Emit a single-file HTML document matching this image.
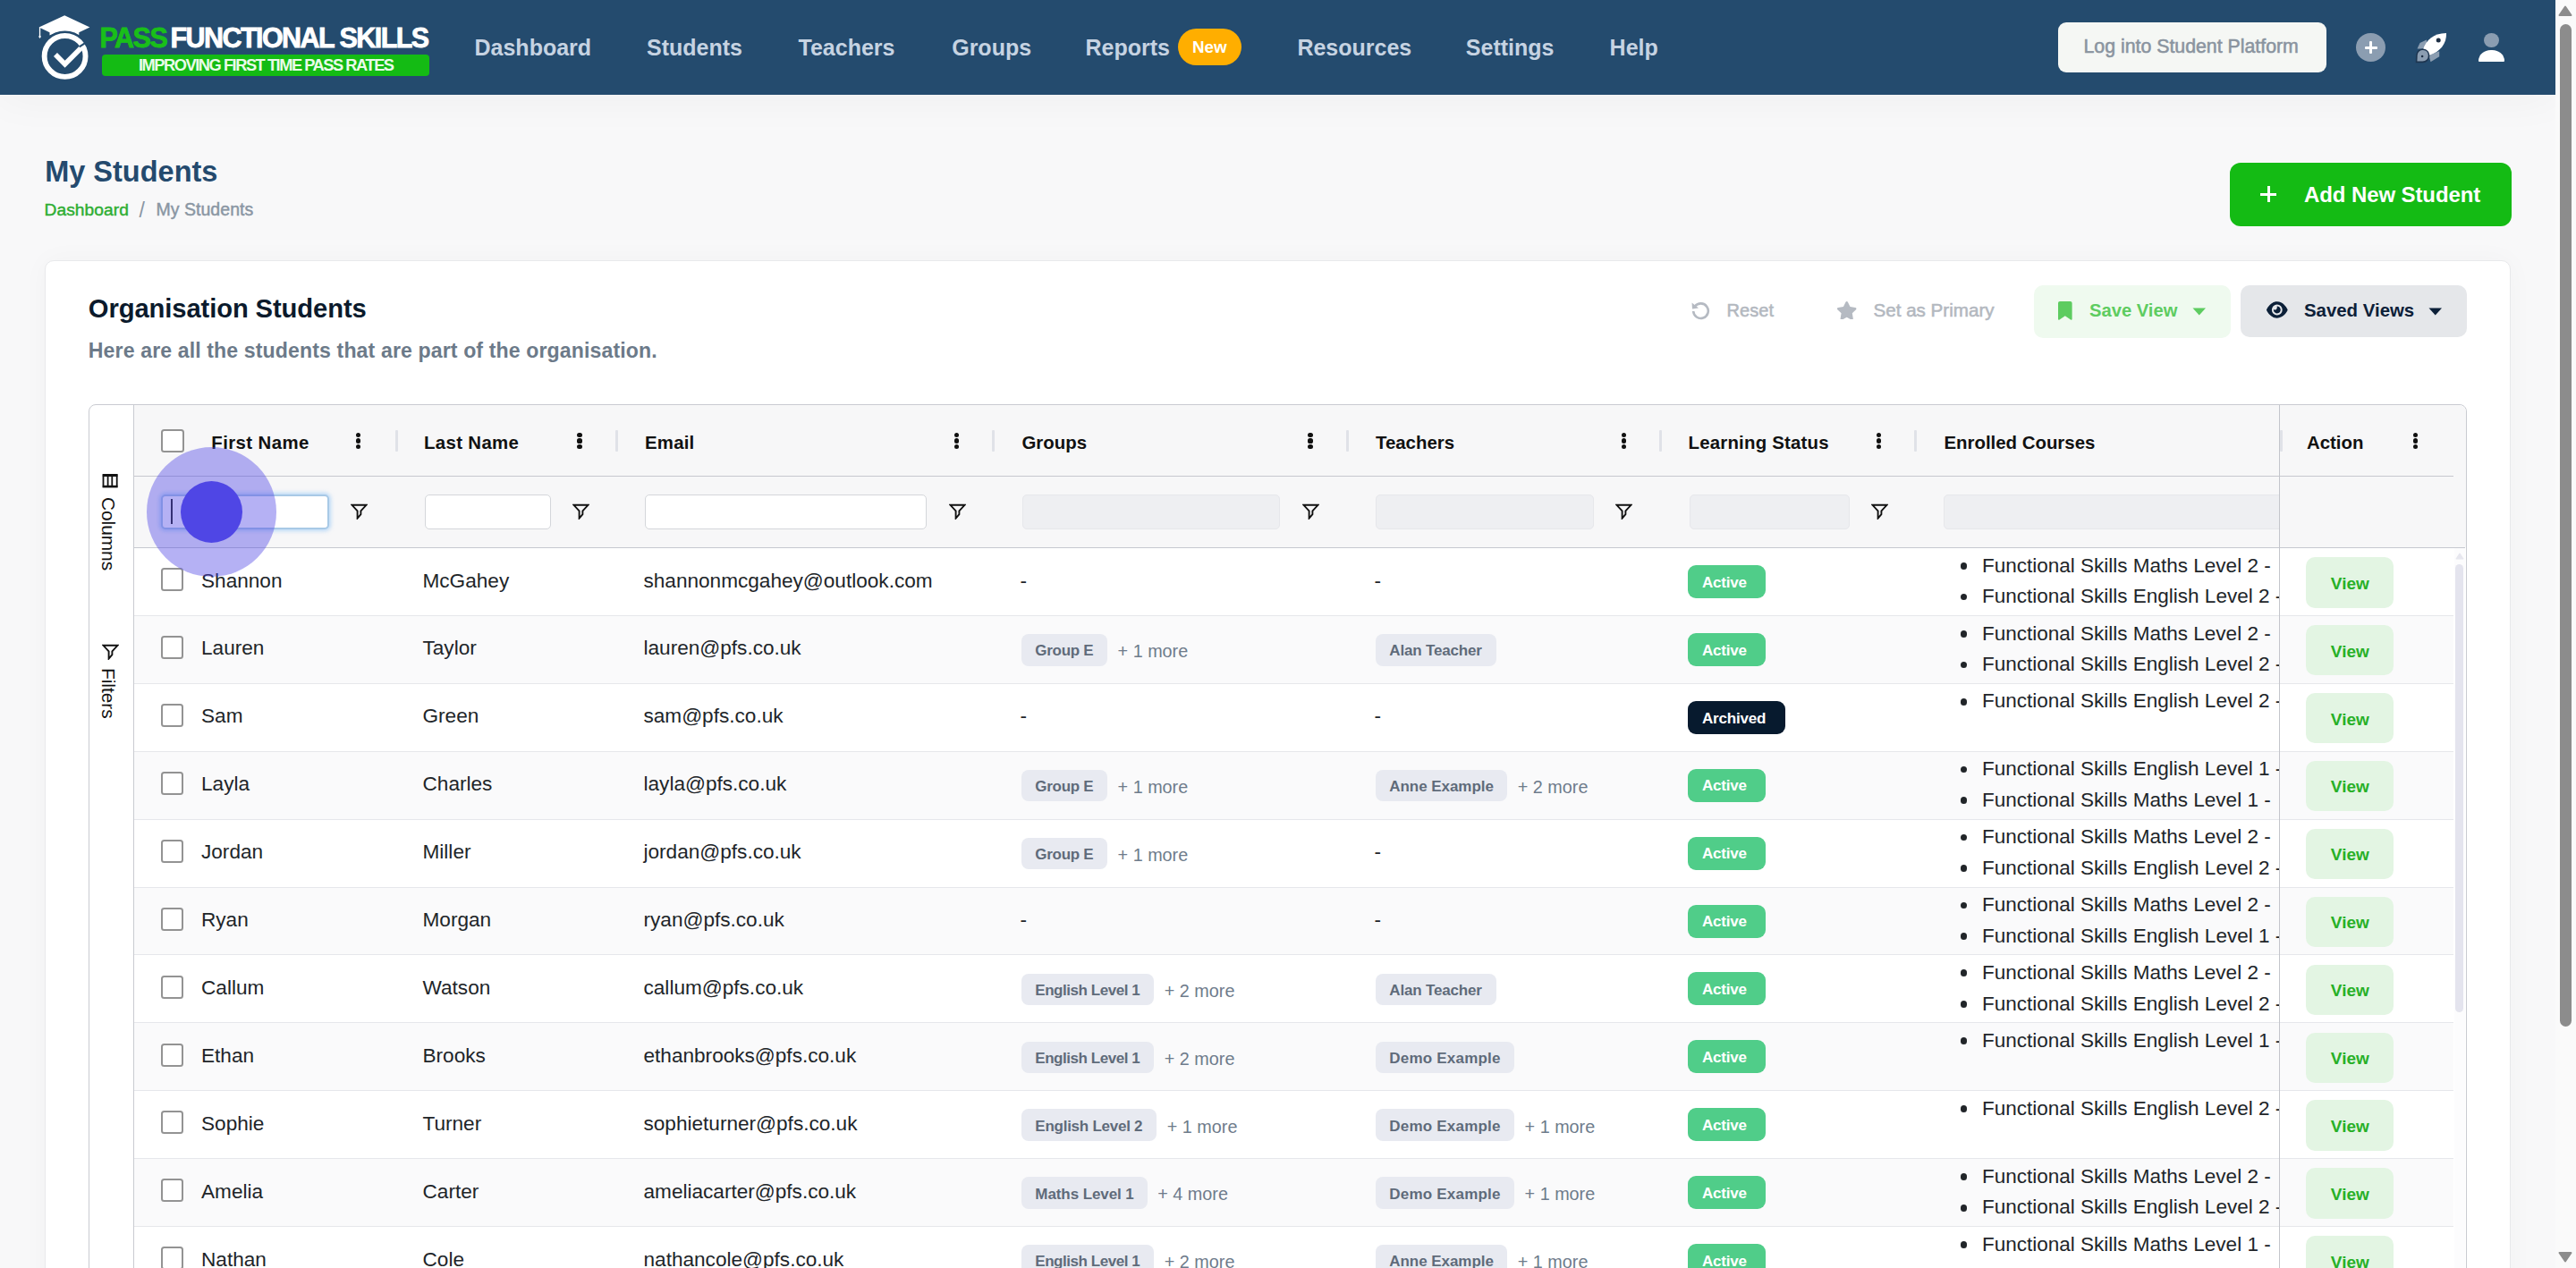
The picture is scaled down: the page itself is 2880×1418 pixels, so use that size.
<!DOCTYPE html>
<html><head><meta charset="utf-8"><title>My Students</title><style>
*{box-sizing:border-box;margin:0;padding:0}
html,body{width:2880px;height:1418px;overflow:hidden}
body{position:relative;background:#f8f8f9;font-family:"Liberation Sans", sans-serif}
.t{position:absolute;white-space:nowrap}
.a{position:absolute}
@media (max-width:2000px){html{zoom:0.5}}
</style></head>
<body>
<div class="a" style="left:0;top:0;width:2857px;height:106px;background:#244b6e;box-shadow:0 4px 50px rgba(0,0,0,0.045)"></div>
<svg class="a" style="left:30px;top:10px" width="80" height="90" viewBox="30 10 80 90">
<path d="M72.2 17.2 L100.4 30.6 L88.3 36.2 L88.3 39.6 Q72.6 31 55.5 39.6 L55.5 36.2 L43.6 30.4 Z" fill="#fff"/>
<rect x="43.9" y="30.4" width="1.3" height="10.5" fill="#fff"/>
<path d="M44.55 39 L45.9 41 L44.55 43 L43.2 41 Z" fill="#fff"/>
<circle cx="72.6" cy="62.9" r="27.2" fill="none" stroke="#244b6e" stroke-width="2.6"/>
<circle cx="72.6" cy="62.9" r="22.95" fill="none" stroke="#fff" stroke-width="5.9"/>
<path d="M62 61 L72.6 71.8 L91.5 52.8" fill="none" stroke="#fff" stroke-width="5.6" stroke-linejoin="miter"/>
<path d="M88.7 52.4 L95.2 48.2" fill="none" stroke="#244b6e" stroke-width="2.2"/>
</svg>
<div class="t" style="left:111.4px;top:27.4px;font-size:30.5px;line-height:30.5px;color:#19bf19;font-weight:700;letter-spacing:-1.45px;-webkit-text-stroke:0.8px #19bf19;">PASS</div>
<div class="t" style="left:190.4px;top:27.4px;font-size:30.5px;line-height:30.5px;color:#fff;font-weight:700;letter-spacing:-1.55px;-webkit-text-stroke:0.8px #fff;">FUNCTIONAL SKILLS</div>
<div class="a" style="left:114px;top:61px;width:366px;height:24px;background:#14bb14;border-radius:4px"></div>
<div class="t" style="left:155px;top:64.2px;font-size:18.3px;line-height:18.3px;color:#e9fbe9;font-weight:700;letter-spacing:-1.48px;">IMPROVING FIRST TIME PASS RATES</div>
<div class="t" style="left:530.5px;top:41.2px;font-size:25px;line-height:25px;color:#c6d3e2;font-weight:700;letter-spacing:0px;">Dashboard</div>
<div class="t" style="left:723px;top:41.2px;font-size:25px;line-height:25px;color:#c6d3e2;font-weight:700;letter-spacing:0px;">Students</div>
<div class="t" style="left:892.5px;top:41.2px;font-size:25px;line-height:25px;color:#c6d3e2;font-weight:700;letter-spacing:0px;">Teachers</div>
<div class="t" style="left:1064.2px;top:41.2px;font-size:25px;line-height:25px;color:#c6d3e2;font-weight:700;letter-spacing:0px;">Groups</div>
<div class="t" style="left:1213.5px;top:41.2px;font-size:25px;line-height:25px;color:#c6d3e2;font-weight:700;letter-spacing:0px;">Reports</div>
<div class="t" style="left:1450.4px;top:41.2px;font-size:25px;line-height:25px;color:#c6d3e2;font-weight:700;letter-spacing:0px;">Resources</div>
<div class="t" style="left:1638.8px;top:41.2px;font-size:25px;line-height:25px;color:#c6d3e2;font-weight:700;letter-spacing:0px;">Settings</div>
<div class="t" style="left:1799.6px;top:41.2px;font-size:25px;line-height:25px;color:#c6d3e2;font-weight:700;letter-spacing:0px;">Help</div>
<div class="a" style="left:1317px;top:32px;width:71px;height:41px;background:#ffae00;border-radius:21px"></div>
<div class="t" style="left:1333px;top:43.9px;font-size:18.8px;line-height:18.8px;color:#fff;font-weight:700;letter-spacing:0px;">New</div>
<div class="a" style="left:2301px;top:25px;width:300px;height:56px;background:#f5f7f4;border-radius:9px"></div>
<div class="t" style="left:2329.5px;top:41.6px;font-size:21.3px;line-height:21.3px;color:#8a949f;font-weight:400;letter-spacing:0px;-webkit-text-stroke:0.55px #8a949f;">Log into Student Platform</div>
<div class="a" style="left:2634.4px;top:36.8px;width:32.8px;height:32.2px;border-radius:50%;background:#8b9db1"></div>
<div class="a" style="left:2643.6px;top:51.5px;width:14.7px;height:3px;background:#fff;border-radius:1px"></div>
<div class="a" style="left:2649.3px;top:46px;width:3.2px;height:14px;background:#fff;border-radius:1px"></div>
<svg class="a" style="left:2698px;top:33px" width="42" height="40" viewBox="2698 33 42 40">
<path d="M2702.5 54.5 L2705.5 48 L2713 44.5 L2713 54.5 Z" fill="#8b9db1"/>
<path d="M2715.5 62 L2727.2 57.2 L2727.2 63.2 L2717.5 69.2 Z" fill="#8b9db1"/>
<path d="M2709.2 54.8 C2712.5 45, 2720 37.3, 2735 36.9 C2735.5 49, 2728 57.5, 2716.3 61.8 Z" fill="#fff"/>
<circle cx="2726.2" cy="44.9" r="2.5" fill="#1d2f44"/>
<path d="M2701.6 69.4 L2701.9 61.5 C2702.3 57, 2706 55, 2709 55.2 C2713 55.5, 2715.6 58.5, 2715.6 62.3 C2715.6 66.5, 2712.5 69.4, 2708.5 69.4 Z" fill="#8b9db1" stroke="#1d3550" stroke-width="1.6"/>
<circle cx="2708.1" cy="63" r="1.3" fill="#1d2f44"/>
</svg>
<div class="a" style="left:2777px;top:36.6px;width:17.4px;height:16.6px;border-radius:50%;background:#8b9db1"></div>
<div class="a" style="left:2770.8px;top:56px;width:29.4px;height:13.2px;border-radius:14.7px 14.7px 1px 1px / 13px 13px 1px 1px;background:#fff"></div>
<div class="a" style="left:2857px;top:0;width:23px;height:1418px;background:#fafafa"></div>
<div class="a" style="left:2862px;top:27px;width:13px;height:1121px;background:#8c8c8c;border-radius:7px"></div>
<svg class="a" style="left:2860px;top:5px" width="16" height="14"><path d="M1.5 12 L8 2.5 L14.5 12 Z" fill="#8c8c8c" stroke="#8c8c8c" stroke-linejoin="round" stroke-width="2"/></svg>
<svg class="a" style="left:2860px;top:1399px" width="16" height="14"><path d="M1.5 2 L8 11.5 L14.5 2 Z" fill="#8c8c8c" stroke="#8c8c8c" stroke-linejoin="round" stroke-width="2"/></svg>
<div class="t" style="left:50.2px;top:175.5px;font-size:32.5px;line-height:32.5px;color:#244a6e;font-weight:700;letter-spacing:0px;">My Students</div>
<div class="t" style="left:49.6px;top:224.9px;font-size:19.2px;line-height:19.2px;color:#2eae33;font-weight:400;letter-spacing:0.05px;-webkit-text-stroke:0.45px #2eae33;">Dashboard</div>
<div class="t" style="left:155.5px;top:224.2px;font-size:23px;line-height:23px;color:#8a96a3;font-weight:400;letter-spacing:0px;">/</div>
<div class="t" style="left:174.4px;top:224.6px;font-size:19.5px;line-height:19.5px;color:#8a96a3;font-weight:400;letter-spacing:0.05px;-webkit-text-stroke:0.45px #8a96a3;">My Students</div>
<div class="a" style="left:2493px;top:182px;width:315px;height:71px;background:#14bb14;border-radius:12px"></div>
<div class="a" style="left:2527px;top:215.5px;width:18px;height:3px;background:#fff"></div>
<div class="a" style="left:2534.5px;top:208px;width:3px;height:18px;background:#fff"></div>
<div class="t" style="left:2576px;top:205.8px;font-size:24px;line-height:24px;color:#fff;font-weight:700;letter-spacing:-0.1px;">Add New Student</div>
<div class="a" style="left:50px;top:291px;width:2757px;height:1200px;background:#fff;border-radius:10px;box-shadow:0 0 30px rgba(0,0,0,0.03);border:1px solid #e8e9eb"></div>
<div class="t" style="left:98.8px;top:331.1px;font-size:29.2px;line-height:29.2px;color:#0b1a2c;font-weight:700;letter-spacing:-0.1px;">Organisation Students</div>
<div class="t" style="left:98.8px;top:380.5px;font-size:23.1px;line-height:23.1px;color:#6c7a89;font-weight:700;letter-spacing:0.12px;">Here are all the students that are part of the organisation.</div>
<svg class="a" style="left:1889px;top:336px" width="24" height="22" viewBox="0 0 24 22">
<path d="M6 6.5 A8.3 8.3 0 1 1 4.2 12" fill="none" stroke="#b5bac2" stroke-width="2.6"/>
<path d="M2.5 2.5 L3 9.5 L10 8.5 Z" fill="#b5bac2"/></svg>
<div class="t" style="left:1930.5px;top:337.2px;font-size:20px;line-height:20px;color:#b3b8bf;font-weight:400;letter-spacing:0.1px;-webkit-text-stroke:0.55px #b3b8bf;">Reset</div>
<svg class="a" style="left:2052.5px;top:336.5px" width="23.4" height="20.8" viewBox="0 0 576 512"><path fill="#b5bac2" d="M316.9 18C311.6 7 300.4 0 288.1 0s-23.4 7-28.8 18L195 150.3 51.4 171.5c-12 1.8-22 10.2-25.7 21.7s-.7 24.2 7.9 32.7L137.8 329 113.2 474.7c-2 12 3 24.2 12.9 31.3s23 8 33.8 2.3l128.3-68.5 128.3 68.5c10.8 5.7 23.8 4.9 33.8-2.3s14.9-19.3 12.9-31.3L438.5 329 542.7 225.9c8.6-8.5 11.7-21.2 7.9-32.7s-13.7-19.9-25.7-21.7L381.2 150.3 316.9 18z"/></svg>
<div class="t" style="left:2094.5px;top:336.7px;font-size:20.6px;line-height:20.6px;color:#b3b8bf;font-weight:400;letter-spacing:0px;-webkit-text-stroke:0.55px #b3b8bf;">Set as Primary</div>
<div class="a" style="left:2273.5px;top:318.5px;width:220px;height:59px;background:#effaef;border-radius:10px"></div>
<svg class="a" style="left:2301.2px;top:336.8px" width="15.6" height="20.8" viewBox="0 0 384 512"><path fill="#5dcc60" d="M0 48V487.7C0 501.1 10.9 512 24.3 512c5 0 9.9-1.5 14-4.4L192 400 345.7 507.6c4.1 2.9 9 4.4 14 4.4c13.4 0 24.3-10.9 24.3-24.3V48c0-26.5-21.5-48-48-48H48C21.5 0 0 21.5 0 48z"/></svg>
<div class="t" style="left:2336px;top:336.5px;font-size:20.2px;line-height:20.2px;color:#5dcc60;font-weight:700;letter-spacing:0px;">Save View</div>
<svg class="a" style="left:2451px;top:344px" width="16" height="9"><path d="M0.5 0.5 L15 0.5 L7.75 8.5 Z" fill="#5dcc60"/></svg>
<div class="a" style="left:2505px;top:319px;width:253px;height:58px;background:#e5e7ea;border-radius:10px"></div>
<svg class="a" style="left:2534px;top:336.1px" width="23.6" height="21" viewBox="0 0 576 512"><path fill="#0c2038" d="M288 32c-80.8 0-145.5 36.8-192.6 80.6C48.6 156 17.3 208 2.5 243.7c-3.3 7.9-3.3 16.7 0 24.6C17.3 304 48.6 356 95.4 399.4 142.5 443.2 207.2 480 288 480s145.5-36.8 192.6-80.6c46.8-43.5 78.1-95.4 93-131.1 3.3-7.9 3.3-16.7 0-24.6-14.9-35.7-46.2-87.7-93-131.1C433.5 68.8 368.8 32 288 32zM144 256a144 144 0 1 1 288 0 144 144 0 1 1 -288 0zm144-64c0 35.3-28.7 64-64 64-7.1 0-13.9-1.2-20.3-3.3-5.5-1.8-11.9 1.6-11.7 7.4.3 6.9 1.3 13.8 3.2 20.7 13.7 51.2 66.4 81.6 117.6 67.9s81.6-66.4 67.9-117.6c-11.1-41.5-47.8-69.4-88.6-71.1-5.8-.2-9.2 6.1-7.4 11.7 2.1 6.4 3.3 13.2 3.3 20.3z"/></svg>
<div class="t" style="left:2576px;top:337.3px;font-size:20.4px;line-height:20.4px;color:#0c2038;font-weight:700;letter-spacing:0px;">Saved Views</div>
<svg class="a" style="left:2715px;top:344px" width="16" height="9"><path d="M0.5 0.5 L15 0.5 L7.75 8.5 Z" fill="#0c2038"/></svg>
<div class="a" style="left:99px;top:452px;width:2658.5px;height:1000px;background:#fff;border:1px solid #c9cbd1;border-radius:8px 8px 0 0"></div>
<div class="a" style="left:150px;top:453px;width:2606.5px;height:159px;background:#f7f7f8;border-radius:0 8px 0 0"></div>
<div class="a" style="left:149px;top:453px;width:1px;height:970px;background:#c9cbd1"></div>
<div class="a" style="left:150px;top:532px;width:2593px;height:1px;background:#c6c8cf"></div>
<div class="a" style="left:150px;top:612px;width:2606px;height:1px;background:#c6c8cf"></div>
<svg class="a" style="left:114px;top:529px" width="18" height="17" viewBox="0 0 18 17">
<rect x="1.5" y="2.2" width="15.2" height="13.3" fill="none" stroke="#111" stroke-width="1.8"/>
<rect x="0.8" y="1" width="16.6" height="3" fill="#111"/><rect x="0.8" y="13.8" width="16.6" height="2.2" fill="#111"/>
<rect x="5.7" y="2" width="1.8" height="13" fill="#111"/><rect x="10.4" y="2" width="1.8" height="13" fill="#111"/></svg>
<div class="t" style="left:109.8px;top:555.8px;font-size:20.8px;line-height:20.8px;color:#111;transform-origin:0 0;transform:translate(20.8px,0) rotate(90deg)">Columns</div>
<svg class="a" style="left:114px;top:720px" width="19" height="18" viewBox="0 0 19 18"><path d="M1.5 1.8 L17.5 1.8 L11.4 8.3 L11.4 12.2 L7.6 16.6 L7.6 8.3 Z" fill="none" stroke="#111" stroke-width="1.9" stroke-linejoin="miter"/></svg>
<div class="t" style="left:109.8px;top:747.2px;font-size:20.8px;line-height:20.8px;color:#111;transform-origin:0 0;transform:translate(20.8px,0) rotate(90deg)">Filters</div>
<div class="a" style="left:180px;top:480px;width:26px;height:26px;border:2.8px solid #939393;border-radius:3.5px;background:#fff"></div>
<div class="t" style="left:236.3px;top:484.7px;font-size:20.4px;line-height:20.4px;color:#111;font-weight:700;letter-spacing:0.4px;">First Name</div>
<div class="t" style="left:474px;top:484.7px;font-size:20.4px;line-height:20.4px;color:#111;font-weight:700;letter-spacing:0.35px;">Last Name</div>
<div class="t" style="left:721px;top:484.7px;font-size:20.4px;line-height:20.4px;color:#111;font-weight:700;letter-spacing:0.2px;">Email</div>
<div class="t" style="left:1142.5px;top:484.7px;font-size:20.4px;line-height:20.4px;color:#111;font-weight:700;letter-spacing:0px;">Groups</div>
<div class="t" style="left:1538px;top:484.7px;font-size:20.4px;line-height:20.4px;color:#111;font-weight:700;letter-spacing:0px;">Teachers</div>
<div class="t" style="left:1887.6px;top:484.7px;font-size:20.4px;line-height:20.4px;color:#111;font-weight:700;letter-spacing:0.2px;">Learning Status</div>
<div class="t" style="left:2173.5px;top:484.7px;font-size:20.4px;line-height:20.4px;color:#111;font-weight:700;letter-spacing:0px;">Enrolled Courses</div>
<div class="t" style="left:2579px;top:484.7px;font-size:20.4px;line-height:20.4px;color:#111;font-weight:700;letter-spacing:0.3px;">Action</div>
<div class="a" style="left:398.0px;top:483.7px;width:5.2px;height:5.2px;border-radius:50%;background:#111"></div><div class="a" style="left:398.0px;top:490.4px;width:5.2px;height:5.2px;border-radius:50%;background:#111"></div><div class="a" style="left:398.0px;top:497.2px;width:5.2px;height:5.2px;border-radius:50%;background:#111"></div>
<div class="a" style="left:645.4px;top:483.7px;width:5.2px;height:5.2px;border-radius:50%;background:#111"></div><div class="a" style="left:645.4px;top:490.4px;width:5.2px;height:5.2px;border-radius:50%;background:#111"></div><div class="a" style="left:645.4px;top:497.2px;width:5.2px;height:5.2px;border-radius:50%;background:#111"></div>
<div class="a" style="left:1066.7px;top:483.7px;width:5.2px;height:5.2px;border-radius:50%;background:#111"></div><div class="a" style="left:1066.7px;top:490.4px;width:5.2px;height:5.2px;border-radius:50%;background:#111"></div><div class="a" style="left:1066.7px;top:497.2px;width:5.2px;height:5.2px;border-radius:50%;background:#111"></div>
<div class="a" style="left:1462.4px;top:483.7px;width:5.2px;height:5.2px;border-radius:50%;background:#111"></div><div class="a" style="left:1462.4px;top:490.4px;width:5.2px;height:5.2px;border-radius:50%;background:#111"></div><div class="a" style="left:1462.4px;top:497.2px;width:5.2px;height:5.2px;border-radius:50%;background:#111"></div>
<div class="a" style="left:1812.9px;top:483.7px;width:5.2px;height:5.2px;border-radius:50%;background:#111"></div><div class="a" style="left:1812.9px;top:490.4px;width:5.2px;height:5.2px;border-radius:50%;background:#111"></div><div class="a" style="left:1812.9px;top:497.2px;width:5.2px;height:5.2px;border-radius:50%;background:#111"></div>
<div class="a" style="left:2098.2000000000003px;top:483.7px;width:5.2px;height:5.2px;border-radius:50%;background:#111"></div><div class="a" style="left:2098.2000000000003px;top:490.4px;width:5.2px;height:5.2px;border-radius:50%;background:#111"></div><div class="a" style="left:2098.2000000000003px;top:497.2px;width:5.2px;height:5.2px;border-radius:50%;background:#111"></div>
<div class="a" style="left:2697.7000000000003px;top:483.7px;width:5.2px;height:5.2px;border-radius:50%;background:#111"></div><div class="a" style="left:2697.7000000000003px;top:490.4px;width:5.2px;height:5.2px;border-radius:50%;background:#111"></div><div class="a" style="left:2697.7000000000003px;top:497.2px;width:5.2px;height:5.2px;border-radius:50%;background:#111"></div>
<div class="a" style="left:441.5px;top:481px;width:3px;height:24px;background:#e0e2e8;border-radius:1px"></div>
<div class="a" style="left:688px;top:481px;width:3px;height:24px;background:#e0e2e8;border-radius:1px"></div>
<div class="a" style="left:1108.5px;top:481px;width:3px;height:24px;background:#e0e2e8;border-radius:1px"></div>
<div class="a" style="left:1504.5px;top:481px;width:3px;height:24px;background:#e0e2e8;border-radius:1px"></div>
<div class="a" style="left:1855px;top:481px;width:3px;height:24px;background:#e0e2e8;border-radius:1px"></div>
<div class="a" style="left:2140px;top:481px;width:3px;height:24px;background:#e0e2e8;border-radius:1px"></div>
<div class="a" style="left:2548.5px;top:481px;width:3px;height:24px;background:#e0e2e8;border-radius:1px"></div>
<div class="a" style="left:180px;top:553px;width:188px;height:39px;background:#fff;border:2px solid #a8c9e6;border-radius:5px;box-shadow:0 0 4px 2px rgba(140,195,245,0.55)"></div>
<div class="a" style="left:191px;top:558px;width:1.5px;height:28px;background:#222"></div>
<div class="a" style="left:474.5px;top:553px;width:141.0px;height:39px;background:#fff;border:1px solid #d4d6da;border-radius:5px"></div>
<div class="a" style="left:721px;top:553px;width:314.5px;height:39px;background:#fff;border:1px solid #d4d6da;border-radius:5px"></div>
<div class="a" style="left:1142.5px;top:553px;width:288.5px;height:39px;background:#eeeff2;border:1px solid #e6e7eb;border-radius:5px"></div>
<div class="a" style="left:1538px;top:553px;width:244px;height:39px;background:#eeeff2;border:1px solid #e6e7eb;border-radius:5px"></div>
<div class="a" style="left:1888.6px;top:553px;width:179.4000000000001px;height:39px;background:#eeeff2;border:1px solid #e6e7eb;border-radius:5px"></div>
<div class="a" style="left:2173px;top:553px;width:387px;height:39px;background:#eeeff2;border:1px solid #e6e7eb;border-radius:5px"></div>
<svg class="a" style="left:392px;top:563px" width="19" height="18" viewBox="0 0 19 18"><path d="M1.5 1.8 L17.5 1.8 L11.4 8.3 L11.4 12.2 L7.6 16.6 L7.6 8.3 Z" fill="none" stroke="#111" stroke-width="1.9" stroke-linejoin="miter"/></svg>
<svg class="a" style="left:640px;top:563px" width="19" height="18" viewBox="0 0 19 18"><path d="M1.5 1.8 L17.5 1.8 L11.4 8.3 L11.4 12.2 L7.6 16.6 L7.6 8.3 Z" fill="none" stroke="#111" stroke-width="1.9" stroke-linejoin="miter"/></svg>
<svg class="a" style="left:1060.5px;top:563px" width="19" height="18" viewBox="0 0 19 18"><path d="M1.5 1.8 L17.5 1.8 L11.4 8.3 L11.4 12.2 L7.6 16.6 L7.6 8.3 Z" fill="none" stroke="#111" stroke-width="1.9" stroke-linejoin="miter"/></svg>
<svg class="a" style="left:1456px;top:563px" width="19" height="18" viewBox="0 0 19 18"><path d="M1.5 1.8 L17.5 1.8 L11.4 8.3 L11.4 12.2 L7.6 16.6 L7.6 8.3 Z" fill="none" stroke="#111" stroke-width="1.9" stroke-linejoin="miter"/></svg>
<svg class="a" style="left:1806px;top:563px" width="19" height="18" viewBox="0 0 19 18"><path d="M1.5 1.8 L17.5 1.8 L11.4 8.3 L11.4 12.2 L7.6 16.6 L7.6 8.3 Z" fill="none" stroke="#111" stroke-width="1.9" stroke-linejoin="miter"/></svg>
<svg class="a" style="left:2092px;top:563px" width="19" height="18" viewBox="0 0 19 18"><path d="M1.5 1.8 L17.5 1.8 L11.4 8.3 L11.4 12.2 L7.6 16.6 L7.6 8.3 Z" fill="none" stroke="#111" stroke-width="1.9" stroke-linejoin="miter"/></svg>
<div class="a" style="left:2549px;top:453px;width:207px;height:159px;background:#f7f7f8;border-radius:0 8px 0 0"></div>
<div class="a" style="left:2697.7000000000003px;top:483.7px;width:5.2px;height:5.2px;border-radius:50%;background:#111"></div><div class="a" style="left:2697.7000000000003px;top:490.4px;width:5.2px;height:5.2px;border-radius:50%;background:#111"></div><div class="a" style="left:2697.7000000000003px;top:497.2px;width:5.2px;height:5.2px;border-radius:50%;background:#111"></div>
<div class="t" style="left:2579px;top:484.7px;font-size:20.4px;line-height:20.4px;color:#111;font-weight:700;letter-spacing:0px;">Action</div>
<div class="a" style="left:2549px;top:532px;width:194px;height:1px;background:#c6c8cf"></div>
<div class="a" style="left:2549px;top:481px;width:3px;height:24px;background:#e0e2e8;border-radius:1px"></div>
<div class="a" style="left:150px;top:613px;width:2606px;height:805px;overflow:hidden"><div class="a" style="left:-150px;top:-613px;width:2880px;height:1418px"><div class="a" style="left:150px;top:613.0px;width:2593px;height:75.9px;background:#ffffff"></div>
<div class="a" style="left:150px;top:687.9px;width:2593px;height:1px;background:#e6e7eb"></div>
<div class="a" style="left:179.5px;top:635.2px;width:25.8px;height:26px;border:2.8px solid #939393;border-radius:3.5px;background:#fff"></div>
<div class="t" style="left:225px;top:638.5px;font-size:22.6px;line-height:22.6px;color:#212529;font-weight:400;letter-spacing:0px;">Shannon</div>
<div class="t" style="left:472.5px;top:638.5px;font-size:22.6px;line-height:22.6px;color:#212529;font-weight:400;letter-spacing:0px;">McGahey</div>
<div class="t" style="left:719.5px;top:638.5px;font-size:22.6px;line-height:22.6px;color:#212529;font-weight:400;letter-spacing:0px;">shannonmcgahey@outlook.com</div>
<div class="t" style="left:1140.5px;top:638.5px;font-size:22.6px;line-height:22.6px;color:#212529;font-weight:400;letter-spacing:0px;">-</div>
<div class="t" style="left:1536.5px;top:638.5px;font-size:22.6px;line-height:22.6px;color:#212529;font-weight:400;letter-spacing:0px;">-</div>
<div class="a" style="left:1887px;top:632.0px;width:86.8px;height:37px;background:#50cd89;border-radius:9px"></div>
<div class="t" style="left:1903px;top:642.7px;font-size:17px;line-height:17px;color:#fff;font-weight:700;letter-spacing:-0.2px;">Active</div>
<div class="a" style="left:2191.5px;top:629.0px;width:7.8px;height:7.8px;border-radius:50%;background:#212529"></div>
<div class="a" style="left:2216px;top:617.6px;width:332px;height:30.5px;overflow:hidden"><div class="t" style="left:0;top:4px;font-size:22.5px;line-height:22.5px;color:#212529">Functional Skills Maths Level 2 -</div></div>
<div class="a" style="left:2191.5px;top:663.7px;width:7.8px;height:7.8px;border-radius:50%;background:#212529"></div>
<div class="a" style="left:2216px;top:652.3px;width:332px;height:30.5px;overflow:hidden"><div class="t" style="left:0;top:4px;font-size:22.5px;line-height:22.5px;color:#212529">Functional Skills English Level 2 -</div></div>
<div class="a" style="left:2577.5px;top:623.2px;width:98.7px;height:56.4px;background:#e3f5e3;border-radius:10px"></div>
<div class="t" style="left:2605.8px;top:642.7px;font-size:19px;line-height:19px;color:#27b027;font-weight:700;letter-spacing:0px;">View</div>
<div class="a" style="left:150px;top:688.9px;width:2593px;height:75.9px;background:#fafafb"></div>
<div class="a" style="left:150px;top:763.8px;width:2593px;height:1px;background:#e6e7eb"></div>
<div class="a" style="left:179.5px;top:711.1px;width:25.8px;height:26px;border:2.8px solid #939393;border-radius:3.5px;background:#fff"></div>
<div class="t" style="left:225px;top:714.4px;font-size:22.6px;line-height:22.6px;color:#212529;font-weight:400;letter-spacing:0px;">Lauren</div>
<div class="t" style="left:472.5px;top:714.4px;font-size:22.6px;line-height:22.6px;color:#212529;font-weight:400;letter-spacing:0px;">Taylor</div>
<div class="t" style="left:719.5px;top:714.4px;font-size:22.6px;line-height:22.6px;color:#212529;font-weight:400;letter-spacing:0px;">lauren@pfs.co.uk</div>
<div class="a" style="left:1141.5px;top:709.1px;width:96.3px;height:35.6px;background:#e8eaf1;border-radius:8px"></div>
<div class="t" style="left:1157.3px;top:719.3px;font-size:17px;line-height:17px;color:#5f6b7a;font-weight:700;letter-spacing:-0.28px;">Group E</div>
<div class="t" style="left:1249.6px;top:719.2px;font-size:19.8px;line-height:19.8px;color:#6e7b8b;font-weight:400;letter-spacing:0px;">+ 1 more</div>
<div class="a" style="left:1537.5px;top:709.1px;width:135.1px;height:35.6px;background:#e8eaf1;border-radius:8px"></div>
<div class="t" style="left:1553.3px;top:719.3px;font-size:17px;line-height:17px;color:#5f6b7a;font-weight:700;letter-spacing:-0.17px;">Alan Teacher</div>
<div class="a" style="left:1887px;top:707.9px;width:86.8px;height:37px;background:#50cd89;border-radius:9px"></div>
<div class="t" style="left:1903px;top:718.6px;font-size:17px;line-height:17px;color:#fff;font-weight:700;letter-spacing:-0.2px;">Active</div>
<div class="a" style="left:2191.5px;top:704.9px;width:7.8px;height:7.8px;border-radius:50%;background:#212529"></div>
<div class="a" style="left:2216px;top:693.5px;width:332px;height:30.5px;overflow:hidden"><div class="t" style="left:0;top:4px;font-size:22.5px;line-height:22.5px;color:#212529">Functional Skills Maths Level 2 -</div></div>
<div class="a" style="left:2191.5px;top:739.6px;width:7.8px;height:7.8px;border-radius:50%;background:#212529"></div>
<div class="a" style="left:2216px;top:728.2px;width:332px;height:30.5px;overflow:hidden"><div class="t" style="left:0;top:4px;font-size:22.5px;line-height:22.5px;color:#212529">Functional Skills English Level 2 -</div></div>
<div class="a" style="left:2577.5px;top:699.1px;width:98.7px;height:56.4px;background:#e3f5e3;border-radius:10px"></div>
<div class="t" style="left:2605.8px;top:718.6px;font-size:19px;line-height:19px;color:#27b027;font-weight:700;letter-spacing:0px;">View</div>
<div class="a" style="left:150px;top:764.8px;width:2593px;height:75.9px;background:#ffffff"></div>
<div class="a" style="left:150px;top:839.7px;width:2593px;height:1px;background:#e6e7eb"></div>
<div class="a" style="left:179.5px;top:787.0px;width:25.8px;height:26px;border:2.8px solid #939393;border-radius:3.5px;background:#fff"></div>
<div class="t" style="left:225px;top:790.3px;font-size:22.6px;line-height:22.6px;color:#212529;font-weight:400;letter-spacing:0px;">Sam</div>
<div class="t" style="left:472.5px;top:790.3px;font-size:22.6px;line-height:22.6px;color:#212529;font-weight:400;letter-spacing:0px;">Green</div>
<div class="t" style="left:719.5px;top:790.3px;font-size:22.6px;line-height:22.6px;color:#212529;font-weight:400;letter-spacing:0px;">sam@pfs.co.uk</div>
<div class="t" style="left:1140.5px;top:790.3px;font-size:22.6px;line-height:22.6px;color:#212529;font-weight:400;letter-spacing:0px;">-</div>
<div class="t" style="left:1536.5px;top:790.3px;font-size:22.6px;line-height:22.6px;color:#212529;font-weight:400;letter-spacing:0px;">-</div>
<div class="a" style="left:1887px;top:783.8px;width:108.6px;height:37px;background:#071a2e;border-radius:9px"></div>
<div class="t" style="left:1903px;top:794.5px;font-size:17px;line-height:17px;color:#fff;font-weight:700;letter-spacing:-0.2px;">Archived</div>
<div class="a" style="left:2191.5px;top:780.8px;width:7.8px;height:7.8px;border-radius:50%;background:#212529"></div>
<div class="a" style="left:2216px;top:769.4px;width:332px;height:30.5px;overflow:hidden"><div class="t" style="left:0;top:4px;font-size:22.5px;line-height:22.5px;color:#212529">Functional Skills English Level 2 -</div></div>
<div class="a" style="left:2577.5px;top:775.0px;width:98.7px;height:56.4px;background:#e3f5e3;border-radius:10px"></div>
<div class="t" style="left:2605.8px;top:794.5px;font-size:19px;line-height:19px;color:#27b027;font-weight:700;letter-spacing:0px;">View</div>
<div class="a" style="left:150px;top:840.7px;width:2593px;height:75.9px;background:#fafafb"></div>
<div class="a" style="left:150px;top:915.6px;width:2593px;height:1px;background:#e6e7eb"></div>
<div class="a" style="left:179.5px;top:862.9px;width:25.8px;height:26px;border:2.8px solid #939393;border-radius:3.5px;background:#fff"></div>
<div class="t" style="left:225px;top:866.2px;font-size:22.6px;line-height:22.6px;color:#212529;font-weight:400;letter-spacing:0px;">Layla</div>
<div class="t" style="left:472.5px;top:866.2px;font-size:22.6px;line-height:22.6px;color:#212529;font-weight:400;letter-spacing:0px;">Charles</div>
<div class="t" style="left:719.5px;top:866.2px;font-size:22.6px;line-height:22.6px;color:#212529;font-weight:400;letter-spacing:0px;">layla@pfs.co.uk</div>
<div class="a" style="left:1141.5px;top:860.9px;width:96.3px;height:35.6px;background:#e8eaf1;border-radius:8px"></div>
<div class="t" style="left:1157.3px;top:871.1px;font-size:17px;line-height:17px;color:#5f6b7a;font-weight:700;letter-spacing:-0.28px;">Group E</div>
<div class="t" style="left:1249.6px;top:871.0px;font-size:19.8px;line-height:19.8px;color:#6e7b8b;font-weight:400;letter-spacing:0px;">+ 1 more</div>
<div class="a" style="left:1537.5px;top:860.9px;width:147.5px;height:35.6px;background:#e8eaf1;border-radius:8px"></div>
<div class="t" style="left:1553.3px;top:871.1px;font-size:17px;line-height:17px;color:#5f6b7a;font-weight:700;letter-spacing:-0.05px;">Anne Example</div>
<div class="t" style="left:1696.8px;top:871.0px;font-size:19.8px;line-height:19.8px;color:#6e7b8b;font-weight:400;letter-spacing:0px;">+ 2 more</div>
<div class="a" style="left:1887px;top:859.7px;width:86.8px;height:37px;background:#50cd89;border-radius:9px"></div>
<div class="t" style="left:1903px;top:870.4px;font-size:17px;line-height:17px;color:#fff;font-weight:700;letter-spacing:-0.2px;">Active</div>
<div class="a" style="left:2191.5px;top:856.7px;width:7.8px;height:7.8px;border-radius:50%;background:#212529"></div>
<div class="a" style="left:2216px;top:845.3px;width:332px;height:30.5px;overflow:hidden"><div class="t" style="left:0;top:4px;font-size:22.5px;line-height:22.5px;color:#212529">Functional Skills English Level 1 -</div></div>
<div class="a" style="left:2191.5px;top:891.4px;width:7.8px;height:7.8px;border-radius:50%;background:#212529"></div>
<div class="a" style="left:2216px;top:880.0px;width:332px;height:30.5px;overflow:hidden"><div class="t" style="left:0;top:4px;font-size:22.5px;line-height:22.5px;color:#212529">Functional Skills Maths Level 1 -</div></div>
<div class="a" style="left:2577.5px;top:850.9px;width:98.7px;height:56.4px;background:#e3f5e3;border-radius:10px"></div>
<div class="t" style="left:2605.8px;top:870.4px;font-size:19px;line-height:19px;color:#27b027;font-weight:700;letter-spacing:0px;">View</div>
<div class="a" style="left:150px;top:916.6px;width:2593px;height:75.9px;background:#ffffff"></div>
<div class="a" style="left:150px;top:991.5px;width:2593px;height:1px;background:#e6e7eb"></div>
<div class="a" style="left:179.5px;top:938.8px;width:25.8px;height:26px;border:2.8px solid #939393;border-radius:3.5px;background:#fff"></div>
<div class="t" style="left:225px;top:942.1px;font-size:22.6px;line-height:22.6px;color:#212529;font-weight:400;letter-spacing:0px;">Jordan</div>
<div class="t" style="left:472.5px;top:942.1px;font-size:22.6px;line-height:22.6px;color:#212529;font-weight:400;letter-spacing:0px;">Miller</div>
<div class="t" style="left:719.5px;top:942.1px;font-size:22.6px;line-height:22.6px;color:#212529;font-weight:400;letter-spacing:0px;">jordan@pfs.co.uk</div>
<div class="a" style="left:1141.5px;top:936.8px;width:96.3px;height:35.6px;background:#e8eaf1;border-radius:8px"></div>
<div class="t" style="left:1157.3px;top:947.0px;font-size:17px;line-height:17px;color:#5f6b7a;font-weight:700;letter-spacing:-0.28px;">Group E</div>
<div class="t" style="left:1249.6px;top:946.9px;font-size:19.8px;line-height:19.8px;color:#6e7b8b;font-weight:400;letter-spacing:0px;">+ 1 more</div>
<div class="t" style="left:1536.5px;top:942.1px;font-size:22.6px;line-height:22.6px;color:#212529;font-weight:400;letter-spacing:0px;">-</div>
<div class="a" style="left:1887px;top:935.6px;width:86.8px;height:37px;background:#50cd89;border-radius:9px"></div>
<div class="t" style="left:1903px;top:946.3px;font-size:17px;line-height:17px;color:#fff;font-weight:700;letter-spacing:-0.2px;">Active</div>
<div class="a" style="left:2191.5px;top:932.6px;width:7.8px;height:7.8px;border-radius:50%;background:#212529"></div>
<div class="a" style="left:2216px;top:921.2px;width:332px;height:30.5px;overflow:hidden"><div class="t" style="left:0;top:4px;font-size:22.5px;line-height:22.5px;color:#212529">Functional Skills Maths Level 2 -</div></div>
<div class="a" style="left:2191.5px;top:967.3px;width:7.8px;height:7.8px;border-radius:50%;background:#212529"></div>
<div class="a" style="left:2216px;top:955.9px;width:332px;height:30.5px;overflow:hidden"><div class="t" style="left:0;top:4px;font-size:22.5px;line-height:22.5px;color:#212529">Functional Skills English Level 2 -</div></div>
<div class="a" style="left:2577.5px;top:926.8px;width:98.7px;height:56.4px;background:#e3f5e3;border-radius:10px"></div>
<div class="t" style="left:2605.8px;top:946.3px;font-size:19px;line-height:19px;color:#27b027;font-weight:700;letter-spacing:0px;">View</div>
<div class="a" style="left:150px;top:992.5px;width:2593px;height:75.9px;background:#fafafb"></div>
<div class="a" style="left:150px;top:1067.4px;width:2593px;height:1px;background:#e6e7eb"></div>
<div class="a" style="left:179.5px;top:1014.7px;width:25.8px;height:26px;border:2.8px solid #939393;border-radius:3.5px;background:#fff"></div>
<div class="t" style="left:225px;top:1018.0px;font-size:22.6px;line-height:22.6px;color:#212529;font-weight:400;letter-spacing:0px;">Ryan</div>
<div class="t" style="left:472.5px;top:1018.0px;font-size:22.6px;line-height:22.6px;color:#212529;font-weight:400;letter-spacing:0px;">Morgan</div>
<div class="t" style="left:719.5px;top:1018.0px;font-size:22.6px;line-height:22.6px;color:#212529;font-weight:400;letter-spacing:0px;">ryan@pfs.co.uk</div>
<div class="t" style="left:1140.5px;top:1018.0px;font-size:22.6px;line-height:22.6px;color:#212529;font-weight:400;letter-spacing:0px;">-</div>
<div class="t" style="left:1536.5px;top:1018.0px;font-size:22.6px;line-height:22.6px;color:#212529;font-weight:400;letter-spacing:0px;">-</div>
<div class="a" style="left:1887px;top:1011.5px;width:86.8px;height:37px;background:#50cd89;border-radius:9px"></div>
<div class="t" style="left:1903px;top:1022.2px;font-size:17px;line-height:17px;color:#fff;font-weight:700;letter-spacing:-0.2px;">Active</div>
<div class="a" style="left:2191.5px;top:1008.5px;width:7.8px;height:7.8px;border-radius:50%;background:#212529"></div>
<div class="a" style="left:2216px;top:997.1px;width:332px;height:30.5px;overflow:hidden"><div class="t" style="left:0;top:4px;font-size:22.5px;line-height:22.5px;color:#212529">Functional Skills Maths Level 2 -</div></div>
<div class="a" style="left:2191.5px;top:1043.2px;width:7.8px;height:7.8px;border-radius:50%;background:#212529"></div>
<div class="a" style="left:2216px;top:1031.8px;width:332px;height:30.5px;overflow:hidden"><div class="t" style="left:0;top:4px;font-size:22.5px;line-height:22.5px;color:#212529">Functional Skills English Level 1 -</div></div>
<div class="a" style="left:2577.5px;top:1002.7px;width:98.7px;height:56.4px;background:#e3f5e3;border-radius:10px"></div>
<div class="t" style="left:2605.8px;top:1022.2px;font-size:19px;line-height:19px;color:#27b027;font-weight:700;letter-spacing:0px;">View</div>
<div class="a" style="left:150px;top:1068.4px;width:2593px;height:75.9px;background:#ffffff"></div>
<div class="a" style="left:150px;top:1143.3px;width:2593px;height:1px;background:#e6e7eb"></div>
<div class="a" style="left:179.5px;top:1090.6px;width:25.8px;height:26px;border:2.8px solid #939393;border-radius:3.5px;background:#fff"></div>
<div class="t" style="left:225px;top:1093.9px;font-size:22.6px;line-height:22.6px;color:#212529;font-weight:400;letter-spacing:0px;">Callum</div>
<div class="t" style="left:472.5px;top:1093.9px;font-size:22.6px;line-height:22.6px;color:#212529;font-weight:400;letter-spacing:0px;">Watson</div>
<div class="t" style="left:719.5px;top:1093.9px;font-size:22.6px;line-height:22.6px;color:#212529;font-weight:400;letter-spacing:0px;">callum@pfs.co.uk</div>
<div class="a" style="left:1141.5px;top:1088.6px;width:148.5px;height:35.6px;background:#e8eaf1;border-radius:8px"></div>
<div class="t" style="left:1157.3px;top:1098.8px;font-size:17px;line-height:17px;color:#5f6b7a;font-weight:700;letter-spacing:-0.46px;">English Level 1</div>
<div class="t" style="left:1301.8px;top:1098.7px;font-size:19.8px;line-height:19.8px;color:#6e7b8b;font-weight:400;letter-spacing:0px;">+ 2 more</div>
<div class="a" style="left:1537.5px;top:1088.6px;width:135.1px;height:35.6px;background:#e8eaf1;border-radius:8px"></div>
<div class="t" style="left:1553.3px;top:1098.8px;font-size:17px;line-height:17px;color:#5f6b7a;font-weight:700;letter-spacing:-0.17px;">Alan Teacher</div>
<div class="a" style="left:1887px;top:1087.4px;width:86.8px;height:37px;background:#50cd89;border-radius:9px"></div>
<div class="t" style="left:1903px;top:1098.1px;font-size:17px;line-height:17px;color:#fff;font-weight:700;letter-spacing:-0.2px;">Active</div>
<div class="a" style="left:2191.5px;top:1084.4px;width:7.8px;height:7.8px;border-radius:50%;background:#212529"></div>
<div class="a" style="left:2216px;top:1073.0px;width:332px;height:30.5px;overflow:hidden"><div class="t" style="left:0;top:4px;font-size:22.5px;line-height:22.5px;color:#212529">Functional Skills Maths Level 2 -</div></div>
<div class="a" style="left:2191.5px;top:1119.1px;width:7.8px;height:7.8px;border-radius:50%;background:#212529"></div>
<div class="a" style="left:2216px;top:1107.7px;width:332px;height:30.5px;overflow:hidden"><div class="t" style="left:0;top:4px;font-size:22.5px;line-height:22.5px;color:#212529">Functional Skills English Level 2 -</div></div>
<div class="a" style="left:2577.5px;top:1078.6px;width:98.7px;height:56.4px;background:#e3f5e3;border-radius:10px"></div>
<div class="t" style="left:2605.8px;top:1098.1px;font-size:19px;line-height:19px;color:#27b027;font-weight:700;letter-spacing:0px;">View</div>
<div class="a" style="left:150px;top:1144.3px;width:2593px;height:75.9px;background:#fafafb"></div>
<div class="a" style="left:150px;top:1219.2px;width:2593px;height:1px;background:#e6e7eb"></div>
<div class="a" style="left:179.5px;top:1166.5px;width:25.8px;height:26px;border:2.8px solid #939393;border-radius:3.5px;background:#fff"></div>
<div class="t" style="left:225px;top:1169.8px;font-size:22.6px;line-height:22.6px;color:#212529;font-weight:400;letter-spacing:0px;">Ethan</div>
<div class="t" style="left:472.5px;top:1169.8px;font-size:22.6px;line-height:22.6px;color:#212529;font-weight:400;letter-spacing:0px;">Brooks</div>
<div class="t" style="left:719.5px;top:1169.8px;font-size:22.6px;line-height:22.6px;color:#212529;font-weight:400;letter-spacing:0px;">ethanbrooks@pfs.co.uk</div>
<div class="a" style="left:1141.5px;top:1164.5px;width:148.5px;height:35.6px;background:#e8eaf1;border-radius:8px"></div>
<div class="t" style="left:1157.3px;top:1174.7px;font-size:17px;line-height:17px;color:#5f6b7a;font-weight:700;letter-spacing:-0.46px;">English Level 1</div>
<div class="t" style="left:1301.8px;top:1174.6px;font-size:19.8px;line-height:19.8px;color:#6e7b8b;font-weight:400;letter-spacing:0px;">+ 2 more</div>
<div class="a" style="left:1537.5px;top:1164.5px;width:155.3px;height:35.6px;background:#e8eaf1;border-radius:8px"></div>
<div class="t" style="left:1553.3px;top:1174.7px;font-size:17px;line-height:17px;color:#5f6b7a;font-weight:700;letter-spacing:0.21px;">Demo Example</div>
<div class="a" style="left:1887px;top:1163.3px;width:86.8px;height:37px;background:#50cd89;border-radius:9px"></div>
<div class="t" style="left:1903px;top:1174.0px;font-size:17px;line-height:17px;color:#fff;font-weight:700;letter-spacing:-0.2px;">Active</div>
<div class="a" style="left:2191.5px;top:1160.3px;width:7.8px;height:7.8px;border-radius:50%;background:#212529"></div>
<div class="a" style="left:2216px;top:1148.9px;width:332px;height:30.5px;overflow:hidden"><div class="t" style="left:0;top:4px;font-size:22.5px;line-height:22.5px;color:#212529">Functional Skills English Level 1 -</div></div>
<div class="a" style="left:2577.5px;top:1154.5px;width:98.7px;height:56.4px;background:#e3f5e3;border-radius:10px"></div>
<div class="t" style="left:2605.8px;top:1174.0px;font-size:19px;line-height:19px;color:#27b027;font-weight:700;letter-spacing:0px;">View</div>
<div class="a" style="left:150px;top:1220.2px;width:2593px;height:75.9px;background:#ffffff"></div>
<div class="a" style="left:150px;top:1295.1px;width:2593px;height:1px;background:#e6e7eb"></div>
<div class="a" style="left:179.5px;top:1242.4px;width:25.8px;height:26px;border:2.8px solid #939393;border-radius:3.5px;background:#fff"></div>
<div class="t" style="left:225px;top:1245.7px;font-size:22.6px;line-height:22.6px;color:#212529;font-weight:400;letter-spacing:0px;">Sophie</div>
<div class="t" style="left:472.5px;top:1245.7px;font-size:22.6px;line-height:22.6px;color:#212529;font-weight:400;letter-spacing:0px;">Turner</div>
<div class="t" style="left:719.5px;top:1245.7px;font-size:22.6px;line-height:22.6px;color:#212529;font-weight:400;letter-spacing:0px;">sophieturner@pfs.co.uk</div>
<div class="a" style="left:1141.5px;top:1240.4px;width:151.5px;height:35.6px;background:#e8eaf1;border-radius:8px"></div>
<div class="t" style="left:1157.3px;top:1250.6px;font-size:17px;line-height:17px;color:#5f6b7a;font-weight:700;letter-spacing:-0.25px;">English Level 2</div>
<div class="t" style="left:1304.8px;top:1250.5px;font-size:19.8px;line-height:19.8px;color:#6e7b8b;font-weight:400;letter-spacing:0px;">+ 1 more</div>
<div class="a" style="left:1537.5px;top:1240.4px;width:155.3px;height:35.6px;background:#e8eaf1;border-radius:8px"></div>
<div class="t" style="left:1553.3px;top:1250.6px;font-size:17px;line-height:17px;color:#5f6b7a;font-weight:700;letter-spacing:0.21px;">Demo Example</div>
<div class="t" style="left:1704.6px;top:1250.5px;font-size:19.8px;line-height:19.8px;color:#6e7b8b;font-weight:400;letter-spacing:0px;">+ 1 more</div>
<div class="a" style="left:1887px;top:1239.2px;width:86.8px;height:37px;background:#50cd89;border-radius:9px"></div>
<div class="t" style="left:1903px;top:1249.9px;font-size:17px;line-height:17px;color:#fff;font-weight:700;letter-spacing:-0.2px;">Active</div>
<div class="a" style="left:2191.5px;top:1236.2px;width:7.8px;height:7.8px;border-radius:50%;background:#212529"></div>
<div class="a" style="left:2216px;top:1224.8px;width:332px;height:30.5px;overflow:hidden"><div class="t" style="left:0;top:4px;font-size:22.5px;line-height:22.5px;color:#212529">Functional Skills English Level 2 -</div></div>
<div class="a" style="left:2577.5px;top:1230.4px;width:98.7px;height:56.4px;background:#e3f5e3;border-radius:10px"></div>
<div class="t" style="left:2605.8px;top:1249.9px;font-size:19px;line-height:19px;color:#27b027;font-weight:700;letter-spacing:0px;">View</div>
<div class="a" style="left:150px;top:1296.1px;width:2593px;height:75.9px;background:#fafafb"></div>
<div class="a" style="left:150px;top:1371.0px;width:2593px;height:1px;background:#e6e7eb"></div>
<div class="a" style="left:179.5px;top:1318.3px;width:25.8px;height:26px;border:2.8px solid #939393;border-radius:3.5px;background:#fff"></div>
<div class="t" style="left:225px;top:1321.6px;font-size:22.6px;line-height:22.6px;color:#212529;font-weight:400;letter-spacing:0px;">Amelia</div>
<div class="t" style="left:472.5px;top:1321.6px;font-size:22.6px;line-height:22.6px;color:#212529;font-weight:400;letter-spacing:0px;">Carter</div>
<div class="t" style="left:719.5px;top:1321.6px;font-size:22.6px;line-height:22.6px;color:#212529;font-weight:400;letter-spacing:0px;">ameliacarter@pfs.co.uk</div>
<div class="a" style="left:1141.5px;top:1316.3px;width:141.0px;height:35.6px;background:#e8eaf1;border-radius:8px"></div>
<div class="t" style="left:1157.3px;top:1326.5px;font-size:17px;line-height:17px;color:#5f6b7a;font-weight:700;letter-spacing:-0.08px;">Maths Level 1</div>
<div class="t" style="left:1294.3px;top:1326.4px;font-size:19.8px;line-height:19.8px;color:#6e7b8b;font-weight:400;letter-spacing:0px;">+ 4 more</div>
<div class="a" style="left:1537.5px;top:1316.3px;width:155.3px;height:35.6px;background:#e8eaf1;border-radius:8px"></div>
<div class="t" style="left:1553.3px;top:1326.5px;font-size:17px;line-height:17px;color:#5f6b7a;font-weight:700;letter-spacing:0.21px;">Demo Example</div>
<div class="t" style="left:1704.6px;top:1326.4px;font-size:19.8px;line-height:19.8px;color:#6e7b8b;font-weight:400;letter-spacing:0px;">+ 1 more</div>
<div class="a" style="left:1887px;top:1315.1px;width:86.8px;height:37px;background:#50cd89;border-radius:9px"></div>
<div class="t" style="left:1903px;top:1325.8px;font-size:17px;line-height:17px;color:#fff;font-weight:700;letter-spacing:-0.2px;">Active</div>
<div class="a" style="left:2191.5px;top:1312.1px;width:7.8px;height:7.8px;border-radius:50%;background:#212529"></div>
<div class="a" style="left:2216px;top:1300.7px;width:332px;height:30.5px;overflow:hidden"><div class="t" style="left:0;top:4px;font-size:22.5px;line-height:22.5px;color:#212529">Functional Skills Maths Level 2 -</div></div>
<div class="a" style="left:2191.5px;top:1346.8px;width:7.8px;height:7.8px;border-radius:50%;background:#212529"></div>
<div class="a" style="left:2216px;top:1335.4px;width:332px;height:30.5px;overflow:hidden"><div class="t" style="left:0;top:4px;font-size:22.5px;line-height:22.5px;color:#212529">Functional Skills English Level 2 -</div></div>
<div class="a" style="left:2577.5px;top:1306.3px;width:98.7px;height:56.4px;background:#e3f5e3;border-radius:10px"></div>
<div class="t" style="left:2605.8px;top:1325.8px;font-size:19px;line-height:19px;color:#27b027;font-weight:700;letter-spacing:0px;">View</div>
<div class="a" style="left:150px;top:1372.0px;width:2593px;height:75.9px;background:#ffffff"></div>
<div class="a" style="left:150px;top:1446.9px;width:2593px;height:1px;background:#e6e7eb"></div>
<div class="a" style="left:179.5px;top:1394.2px;width:25.8px;height:26px;border:2.8px solid #939393;border-radius:3.5px;background:#fff"></div>
<div class="t" style="left:225px;top:1397.5px;font-size:22.6px;line-height:22.6px;color:#212529;font-weight:400;letter-spacing:0px;">Nathan</div>
<div class="t" style="left:472.5px;top:1397.5px;font-size:22.6px;line-height:22.6px;color:#212529;font-weight:400;letter-spacing:0px;">Cole</div>
<div class="t" style="left:719.5px;top:1397.5px;font-size:22.6px;line-height:22.6px;color:#212529;font-weight:400;letter-spacing:0px;">nathancole@pfs.co.uk</div>
<div class="a" style="left:1141.5px;top:1392.2px;width:148.5px;height:35.6px;background:#e8eaf1;border-radius:8px"></div>
<div class="t" style="left:1157.3px;top:1402.4px;font-size:17px;line-height:17px;color:#5f6b7a;font-weight:700;letter-spacing:-0.46px;">English Level 1</div>
<div class="t" style="left:1301.8px;top:1402.3px;font-size:19.8px;line-height:19.8px;color:#6e7b8b;font-weight:400;letter-spacing:0px;">+ 2 more</div>
<div class="a" style="left:1537.5px;top:1392.2px;width:147.5px;height:35.6px;background:#e8eaf1;border-radius:8px"></div>
<div class="t" style="left:1553.3px;top:1402.4px;font-size:17px;line-height:17px;color:#5f6b7a;font-weight:700;letter-spacing:-0.05px;">Anne Example</div>
<div class="t" style="left:1696.8px;top:1402.3px;font-size:19.8px;line-height:19.8px;color:#6e7b8b;font-weight:400;letter-spacing:0px;">+ 1 more</div>
<div class="a" style="left:1887px;top:1391.0px;width:86.8px;height:37px;background:#50cd89;border-radius:9px"></div>
<div class="t" style="left:1903px;top:1401.7px;font-size:17px;line-height:17px;color:#fff;font-weight:700;letter-spacing:-0.2px;">Active</div>
<div class="a" style="left:2191.5px;top:1388.0px;width:7.8px;height:7.8px;border-radius:50%;background:#212529"></div>
<div class="a" style="left:2216px;top:1376.6px;width:332px;height:30.5px;overflow:hidden"><div class="t" style="left:0;top:4px;font-size:22.5px;line-height:22.5px;color:#212529">Functional Skills Maths Level 1 -</div></div>
<div class="a" style="left:2577.5px;top:1382.2px;width:98.7px;height:56.4px;background:#e3f5e3;border-radius:10px"></div>
<div class="t" style="left:2605.8px;top:1401.7px;font-size:19px;line-height:19px;color:#27b027;font-weight:700;letter-spacing:0px;">View</div></div></div>
<div class="a" style="left:2548px;top:453px;width:1px;height:965px;background:#c3c5cb"></div>
<div class="a" style="left:2744px;top:613px;width:12px;height:805px;background:#fcfcfd"></div>
<div class="a" style="left:2744.5px;top:631px;width:9.5px;height:501px;background:#e4e4ee;border-radius:5px"></div>
<svg class="a" style="left:2744.5px;top:618px" width="10" height="8"><path d="M1.2 6.8 L5 1.2 L8.8 6.8 Z" fill="#e6e6ee" stroke="#e6e6ee" stroke-width="1.2" stroke-linejoin="round"/></svg>
<div class="a" style="left:164px;top:499.5px;width:145px;height:145px;border-radius:50%;background:rgba(79,70,229,0.42)"></div>
<div class="a" style="left:202px;top:537.5px;width:69.4px;height:69.4px;border-radius:50%;background:#4f46e5"></div>
</body></html>
